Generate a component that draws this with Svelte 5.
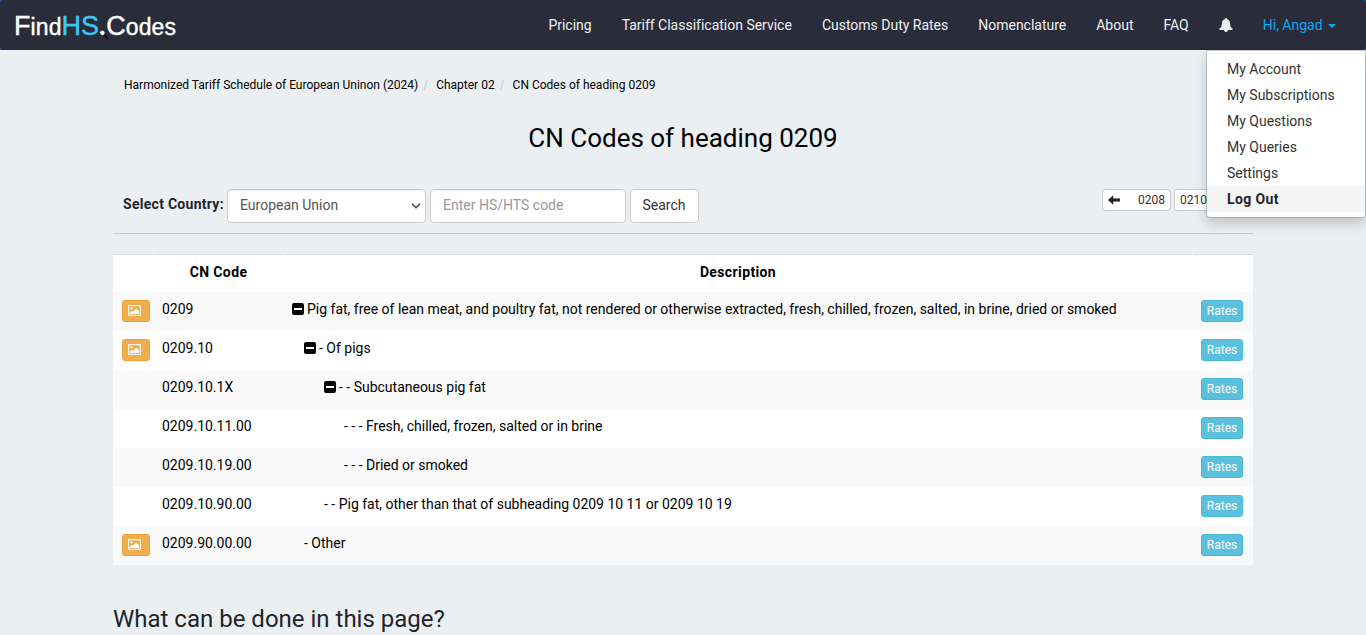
<script>
  const links = ['Pricing', 'Tariff Classification Service', 'Customs Duty Rates', 'Nomenclature', 'About', 'FAQ'];
  const menu = ['My Account', 'My Subscriptions', 'My Questions', 'My Queries', 'Settings', 'Log Out'];
  const crumbs = ['Harmonized Tariff Schedule of European Uninon (2024)', 'Chapter 02', 'CN Codes of heading 0209'];
  const rows = [
    { code: '0209', text: 'Pig fat, free of lean meat, and poultry fat, not rendered or otherwise extracted, fresh, chilled, frozen, salted, in brine, dried or smoked', indent: 0, image: true, open: true },
    { code: '0209.10', text: '- Of pigs', indent: 12, image: true, open: true },
    { code: '0209.10.1X', text: '- - Subcutaneous pig fat', indent: 32, image: false, open: true },
    { code: '0209.10.11.00', text: '- - - Fresh, chilled, frozen, salted or in brine', indent: 52, image: false, open: false },
    { code: '0209.10.19.00', text: '- - - Dried or smoked', indent: 52, image: false, open: false },
    { code: '0209.10.90.00', text: '- - Pig fat, other than that of subheading 0209 10 11 or 0209 10 19', indent: 32, image: false, open: false },
    { code: '0209.90.00.00', text: '- Other', indent: 12, image: true, open: false }
  ];
</script>

<div class="navwrap">
  <nav>
    <a class="logo" href="#home"><b>F</b>ind<b class="hs">HS</b><span class="dot"><svg width="10" height="11" viewBox="0 0 10 11"><path d="M5.2 5.6L8.8 9.6" stroke="#0b0b10" stroke-width="1.8" /><circle cx="3.4" cy="3.8" r="2.8" fill="#fff" stroke="#15151d" stroke-width="1" /></svg></span><b>C</b>odes</a>
    <ul class="links">
      {#each links as l}<li>{l}</li>{/each}
      <li class="bell"><svg width="14" height="14" viewBox="0 0 14 14"><path fill="#eceff2" d="M7 0C6.3 0 6 .5 6 1.2C3.9 1.7 2.9 3.4 2.9 5.4C2.9 8.2 2 9.3.6 10.6C.1 11.1.2 12 1 12H13C13.8 12 13.9 11.1 13.4 10.6C12 9.3 11.1 8.2 11.1 5.4C11.1 3.4 10.1 1.7 8 1.2C8 .5 7.7 0 7 0ZM5 12H9C8.9 13.3 8.1 14 7 14C5.9 14 5.1 13.3 5 12Z" /></svg></li>
      <li class="user">Hi, Angad <i class="caret"></i></li>
    </ul>
    <ul class="menu">
      {#each menu as m}<li class:active={m === 'Log Out'}>{m}</li>{/each}
    </ul>
  </nav>
</div>

<main>
  <ol class="crumbs">
    {#each crumbs as c}<li>{c}</li>{/each}
  </ol>
  <h1>CN Codes of heading 0209</h1>
  <div class="tools">
    <span class="label">Select Country:</span>
    <div class="field select">European Union<svg width="10" height="6" viewBox="0 0 10 6"><path d="M1 .8L5 4.8L9 .8" fill="none" stroke="#444" stroke-width="1.5" /></svg></div>
    <div class="field search">Enter HS/HTS code</div>
    <button class="btn">Search</button>
    <div class="pager">
      <button class="xs prev"><svg width="12" height="10" viewBox="0 0 12 10"><path fill="#222" d="M0 5L5.2 .2V3.4H12V6.6H5.2V9.8Z" /></svg>0208</button>
      <button class="xs next">0210<svg width="12" height="10" viewBox="0 0 12 10"><path fill="#222" d="M12 5L6.8 .2V3.4H0V6.6H6.8V9.8Z" /></svg></button>
    </div>
  </div>
  <section class="table">
    <div class="row head"><div></div><div>CN Code</div><div>Description</div><div></div></div>
    {#each rows as r}
      <div class="row">
        <div class="act">
          {#if r.image}
            <button class="pic" aria-label="Image"><svg width="13" height="11" viewBox="0 0 13 11"><rect x=".6" y=".6" width="11.8" height="9.8" fill="none" stroke="#fff6e8" stroke-width="1.2" /><circle cx="3.5" cy="3.3" r="1.1" fill="#fff" /><path fill="#fff" d="M2 9V7.6L4.1 6L5.3 6.7L8.1 3.6L9.2 5L9.8 4.8L11 6.4V9Z" /></svg></button>
          {/if}
        </div>
        <div class="code">{r.code}</div>
        <div class="desc" style="padding-left: {8 + r.indent}px">
          {#if r.open}<svg class="minus" width="12" height="12" viewBox="0 0 12 12"><rect width="12" height="12" rx="2" fill="#000" /><rect x="2" y="5" width="8" height="2" fill="#fff" /></svg>{/if}<span>{r.text}</span>
        </div>
        <div class="act"><button class="rates">Rates</button></div>
      </div>
    {/each}
  </section>
  <h2>What can be done in this page?</h2>
</main>

<style>
  :global(body) { background: #ebeff2; overflow: hidden; }
  :global(#app) { font: 14px/20px Roboto, sans-serif; color: #212529; }
  ul, ol { list-style: none; margin: 0; padding: 0; }
  button { font-family: inherit; margin: 0; }
  .navwrap { background: #1f5c99; height: 50px; }
  nav { position: relative; height: 50px; display: flex; justify-content: space-between; background: #2b2c3a; border-radius: 4px; box-sizing: border-box; padding-left: 14px; }
  .logo { font: 23px/50px "Liberation Sans", Arial, sans-serif; letter-spacing: .08px; -webkit-text-stroke: .4px; color: #fff; text-decoration: none; display: flex; align-items: baseline; height: 50px; padding-top: 1px; box-sizing: border-box; white-space: nowrap; }
  .logo b { font-weight: 400; font-size: 27px; }
  .logo .hs { color: #3bc8f5; }
  .dot { width: 7px; height: 6px; }
  .dot svg { display: block; overflow: visible; }
  .links { display: flex; }
  .links li { padding: 15px; color: #eceff2; white-space: nowrap; letter-spacing: -.008px; }
  .links .bell { padding-top: 18px; line-height: 0; }
  .links .user { color: #03a9f4; padding-right: 30px; }
  .caret { display: inline-block; margin-left: 2px; vertical-align: middle; border-top: 4px solid; border-left: 4px solid transparent; border-right: 4px solid transparent; }
  .menu { position: absolute; top: 50px; right: 0; z-index: 5; width: 160px; box-sizing: border-box; padding: 5px 0; background: #fff; background-clip: padding-box; border: 1px solid rgba(0,0,0,.15); border-radius: 0 0 4px 4px; box-shadow: 0 6px 12px rgba(0,0,0,.175); }
  .menu li { padding: 3px 20px; color: #333; white-space: nowrap; }
  .menu .active { background: #f5f5f5; font-weight: 700; color: #212529; letter-spacing: .4px; }
  main { width: 1140px; margin: 0 auto; }
  .crumbs { display: flex; padding: 25px 11px 0; font-size: 12px; color: #000; }
  .crumbs li + li::before { content: "/"; color: #ccc; padding: 0 8px 0 5px; }
  h1 { margin: 29px 0 0; font-size: 26px; line-height: 28px; font-weight: 400; text-align: center; color: #000; }
  .tools { display: flex; align-items: flex-start; height: 44px; margin-top: 37px; padding-left: 10px; border-bottom: 1px solid #c5cbce; }
  .label { font-weight: 700; width: 104px; padding-top: 5px; white-space: nowrap; letter-spacing: .28px; }
  .field, .btn { box-sizing: border-box; height: 34px; border: 1px solid #ccc; border-radius: 4px; background: #fff; }
  .field { padding: 5px 12px; color: #555; box-shadow: inset 0 1px 1px rgba(0,0,0,.075); }
  .select { width: 199px; display: flex; justify-content: space-between; padding-right: 4px; }
  .select svg { margin-top: 8px; }
  .search { width: 196px; margin-left: 4px; color: #999; }
  .btn { width: 69px; margin-left: 4px; padding: 0 1px 2px 0; font-size: 14px; color: #333; }
  .pager { margin-left: auto; display: flex; gap: 3px; padding-right: 10px; }
  .xs { box-sizing: border-box; height: 22px; width: 69px; padding: 1px 5px; display: flex; justify-content: space-between; align-items: center; border: 1px solid #ccc; border-radius: 3px; background: #fff; font-size: 12px; color: #333; }
  .table { margin-top: 20px; color: #000; }
  .row { display: grid; grid-template-columns: 41px 130px 909px 60px; height: 39px; background: #fff; }
  .row:nth-child(even) { background: #f9f9f9; }
  .head { height: 38px; font-weight: 700; letter-spacing: .38px; text-align: center; column-gap: 1px; grid-template-columns: 40px 129px 908px 60px; }
  .head div { padding-top: 7px; border-top: 1px solid #ddd; }
  .code, .desc { padding: 7px 8px; white-space: nowrap; letter-spacing: -.006px; }
  .desc { display: flex; }
  .minus { margin: 4px 3px 0 0; }
  .act { padding: 8px 0 0 8px; }
  .pic, .rates { display: block; box-sizing: border-box; height: 22px; border-radius: 3px; }
  .pic { width: 28px; margin-left: 1px; padding: 0 0 1px 5px; border: 1px solid #eea236; background: #f0ad4e; line-height: 0; text-align: left; }
  .pic svg { display: block; }
  .rates { width: 42px; padding: 0; border: 1px solid #46b8da; background: #5bc0de; color: #fff; font-size: 12px; line-height: 20px; }
  h2 { margin: 41px 0 0; font-size: 24px; line-height: 26px; font-weight: 400; }
</style>
